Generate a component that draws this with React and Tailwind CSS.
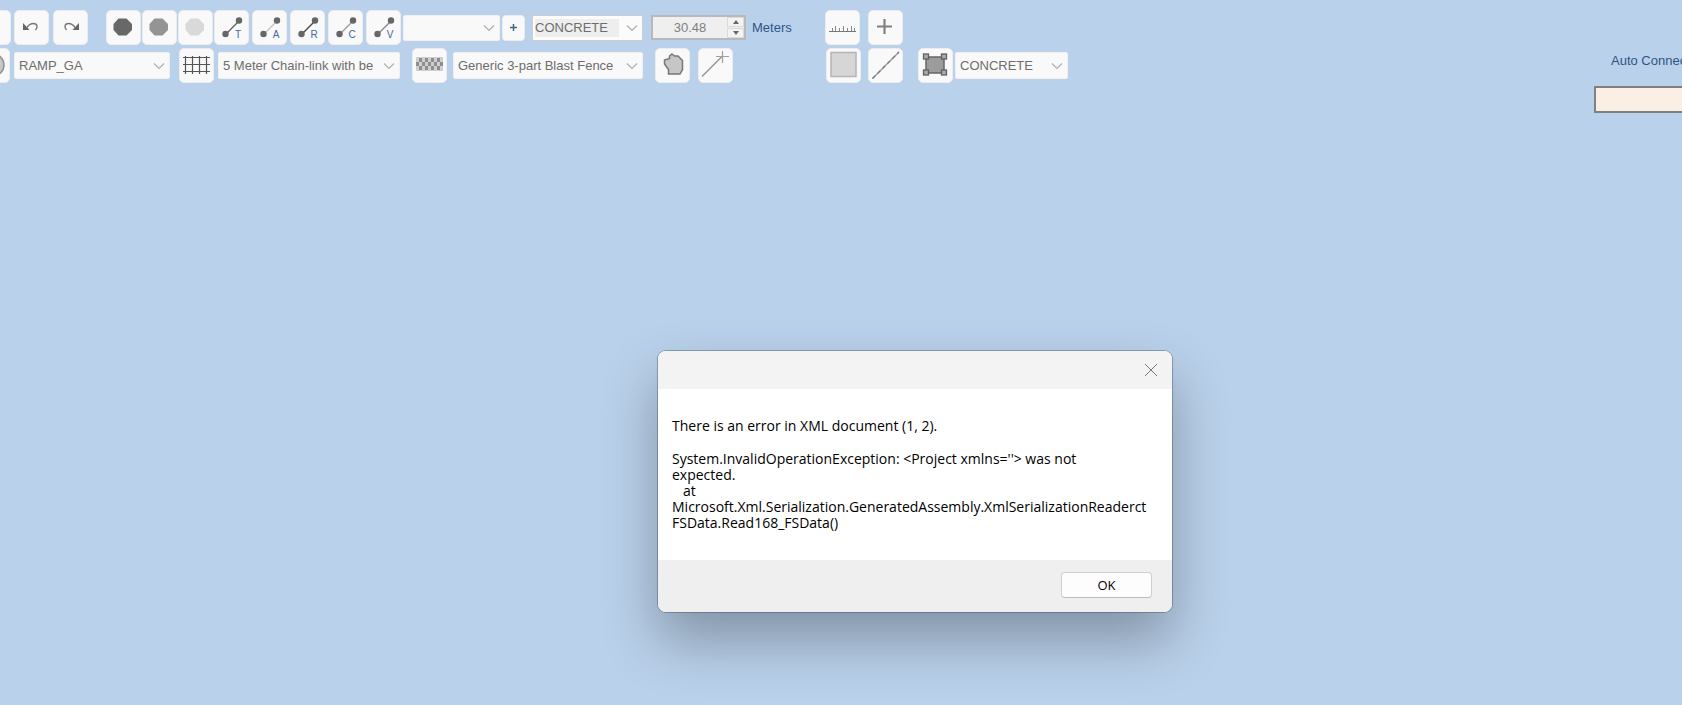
import { useState } from 'react';

const SURFACES = ['CONCRETE', 'ASPHALT', 'GRASS'];
const PARKING = ['RAMP_GA', 'RAMP_CARGO', 'GATE_SMALL'];
const FENCES = ['5 Meter Chain-link with be', '3 Meter Chain-link'];
const BLAST_FENCES = ['Generic 3-part Blast Fence', 'Generic Blast Fence'];

const NODES = [
  { fill: '#686868', label: 'Dark node' },
  { fill: '#949494', label: 'Medium node' },
  { fill: '#d9d9d9', label: 'Light node' },
];

const LINKS = [
  { letter: 'T', stroke: '#666666', label: 'Taxi link' },
  { letter: 'A', stroke: '#c4c4c4', label: 'Apron link' },
  { letter: 'R', stroke: '#4a4a4a', label: 'Runway link' },
  { letter: 'C', stroke: '#a0a0a0', label: 'Closed link' },
  { letter: 'V', stroke: '#8c8c8c', label: 'Vehicle link' },
];

const CHECKS = Array.from({ length: 27 }, (_, i) => ({ x: (i % 9) * 3, y: Math.floor(i / 9) * 4 })).filter(
  (_, i) => i % 2 === 1,
);

function ToolButton({ label, className = '', children }) {
  return (
    <button
      type="button"
      aria-label={label}
      className={`flex size-[35px] shrink-0 items-center justify-center rounded-[5px] border border-[#ececec] bg-[#f9f9f9] ${className}`}
    >
      {children}
    </button>
  );
}

function Icon({ children }) {
  return (
    <svg width="33" height="33" viewBox="0 0 33 33" fill="none" aria-hidden="true">
      {children}
    </svg>
  );
}

function Combo({ label, options, className = '', selectClass = 'border-[#f0f0f0] bg-[#f9f9f9]' }) {
  return (
    <div className={`relative shrink-0 ${className}`}>
      <select
        aria-label={label}
        className={`h-full w-full appearance-none rounded-[2px] border pr-5 text-[#6d6d6d] outline-none ${selectClass}`}
      >
        {options.map((option) => (
          <option key={option}>{option}</option>
        ))}
      </select>
      <svg
        className="pointer-events-none absolute inset-y-0 right-[5px] my-auto"
        width="12"
        height="8"
        viewBox="0 0 12 8"
        fill="none"
        stroke="#b0b0b0"
        strokeWidth="1.200"
        aria-hidden="true"
      >
        <path d="M1 1.500 6 6.500 11 1.500" />
      </svg>
    </div>
  );
}

function LinkIcon({ letter, stroke }) {
  return (
    <Icon>
      <path d="M11 23 24 10" stroke={stroke} strokeWidth="1.500" />
      <circle cx="10.500" cy="23" r="3.200" fill="#666" />
      <circle cx="24" cy="9.500" r="3.200" fill="#666" />
      <text x="23" y="27" textAnchor="middle" fontSize="10" fill="#44689a">
        {letter}
      </text>
    </Icon>
  );
}

function TopRow() {
  const [width, setWidth] = useState(30.48);
  const step = (delta) => setWidth((value) => Number((value + delta).toFixed(2)));

  return (
    <div className="flex items-center">
      <ToolButton label="Save" />
      <ToolButton label="Undo" className="ml-[3px]">
        <Icon>
          <path d="M8 12v7h6.500z" fill="#666" />
          <path d="M11.500 17c2-3 4-4.500 7-4.500 4 0 4.500 4 2 6.500" stroke="#777" strokeWidth="1.400" />
        </Icon>
      </ToolButton>
      <ToolButton label="Redo" className="ml-1">
        <Icon>
          <path d="M25 12v7h-6.500z" fill="#666" />
          <path d="M21.500 17c-2-3-4-4.500-7-4.500-4 0-4.500 4-2 6.500" stroke="#777" strokeWidth="1.400" />
        </Icon>
      </ToolButton>

      <div className="ml-[18px] flex gap-px">
        {NODES.map((node) => (
          <ToolButton key={node.label} label={node.label}>
            <Icon>
              <path d="M11.500 7.500h8l5.500 5.500v6l-5.500 5.500h-8L6.500 19v-6z" fill={node.fill} />
            </Icon>
          </ToolButton>
        ))}
      </div>
      <div className="ml-px flex gap-[3px]">
        {LINKS.map((link) => (
          <ToolButton key={link.letter} label={link.label}>
            <LinkIcon letter={link.letter} stroke={link.stroke} />
          </ToolButton>
        ))}
      </div>

      <Combo label="Name" options={['']} className="ml-0.5 h-[26px] w-[97px]" />
      <button
        type="button"
        aria-label="Add name"
        className="ml-0.5 flex h-[26px] w-[23px] shrink-0 items-center justify-center rounded-[4px] border border-[#ececec] bg-[#f9f9f9]"
      >
        <svg width="7" height="7" viewBox="0 0 7 7" stroke="#47648c" strokeWidth="1.500" aria-hidden="true">
          <path d="M3.500 0v7M0 3.500h7" />
        </svg>
      </button>
      <Combo
        label="Surface"
        options={SURFACES}
        className="ml-[7px] h-[26px] w-[111px]"
        selectClass="border-[#cfcfcf] bg-[linear-gradient(#eeeeee,#eeeeee)] bg-[length:84px_18px] bg-[position:2px_3px] bg-no-repeat bg-[#fbfbfb] pl-0.5"
      />

      <div className="ml-2 flex h-[25px] w-[95px] shrink-0 items-center border-2 border-[#b9b9b9] bg-[#efefef]">
        <input
          id="width"
          type="text"
          value={width.toFixed(2)}
          onChange={(event) => setWidth(Number(event.target.value) || 0)}
          className="w-0 flex-1 bg-transparent text-center text-[#808080] outline-none"
        />
        <div className="flex h-full w-[17px] flex-col gap-px">
          <button
            type="button"
            aria-label="Increase width"
            onClick={() => step(1)}
            className="flex flex-1 items-center justify-center border border-[#dadada] bg-[#f3f3f3]"
          >
            <svg width="6" height="4" viewBox="0 0 6 4" fill="#666" aria-hidden="true">
              <path d="M3 0 6 4H0z" />
            </svg>
          </button>
          <button
            type="button"
            aria-label="Decrease width"
            onClick={() => step(-1)}
            className="flex flex-1 items-center justify-center border border-[#dadada] bg-[#f3f3f3]"
          >
            <svg width="6" height="4" viewBox="0 0 6 4" fill="#666" aria-hidden="true">
              <path d="M3 4 6 0H0z" />
            </svg>
          </button>
        </div>
      </div>
      <label htmlFor="width" className="ml-1.5 w-[73px] shrink-0 text-[#2f5585]">
        Meters
      </label>

      <ToolButton label="Measure">
        <Icon>
          <path d="M3 20.500h27" stroke="#777" />
          <path d="M6.500 20v-3M9.500 20v-5M13.500 20v-3M17.500 20v-5M21.500 20v-3M25.500 20v-5M28.500 20v-3" stroke="#888" />
        </Icon>
      </ToolButton>
      <ToolButton label="Add point" className="ml-2">
        <Icon>
          <path d="M15.500 8v15M8 15.500h15" stroke="#808080" strokeWidth="2.200" />
        </Icon>
      </ToolButton>
    </div>
  );
}

function BottomRow() {
  return (
    <div className="flex items-center">
      <ToolButton label="Parking" className="-ml-px">
        <Icon>
          <circle cx="17" cy="16" r="11" fill="#c8c8c8" stroke="#929292" strokeWidth="1.500" />
        </Icon>
      </ToolButton>
      <Combo
        label="Parking type"
        options={PARKING}
        className="ml-1 h-[27px] w-[156px]"
        selectClass="border-[#f0f0f0] bg-[#f9f9f9] pl-1"
      />

      <ToolButton label="Fence" className="ml-[9px]">
        <Icon>
          <path d="M5.500 7v18M12.500 7v18M19.500 7v18M26.500 7v18M3 8.500h27M3 15.500h27M3 22.500h27" stroke="#555" strokeWidth="1.200" />
        </Icon>
      </ToolButton>
      <Combo
        label="Fence type"
        options={FENCES}
        className="ml-1 h-[27px] w-[182px]"
        selectClass="border-[#f0f0f0] bg-[#f9f9f9] pl-1"
      />

      <ToolButton label="Blast fence" className="ml-3">
        <Icon>
          <rect x="3" y="8" width="27" height="14" fill="#cfcfcf" />
          {CHECKS.map(({ x, y }) => (
            <rect key={`${x}-${y}`} x={x + 3} y={y + 9} width="3" height="4" fill="#8e8e8e" />
          ))}
        </Icon>
      </ToolButton>
      <Combo
        label="Blast fence type"
        options={BLAST_FENCES}
        className="ml-1.5 h-[27px] w-[190px]"
        selectClass="border-[#f0f0f0] bg-[#f9f9f9] pl-1"
      />

      <ToolButton label="Polygon" className="ml-3">
        <Icon>
          <path d="M16 5 18.500 7h3.500l4.500 4.500v9L24 25H12.500v-4.500L8.500 15v-4l5-1.500V7z" fill="#c6c6c6" stroke="#777" strokeWidth="1.500" />
        </Icon>
      </ToolButton>
      <ToolButton label="Line end" className="ml-2">
        <Icon>
          <path d="M3 27.500 23 7.500" stroke="#959595" strokeWidth="1.500" />
          <path d="M23.500 2v12M17 7.500h13" stroke="#a0a0a0" strokeWidth="1.200" />
        </Icon>
      </ToolButton>

      <ToolButton label="Rectangle" className="ml-[93px]">
        <Icon>
          <rect x="4" y="3.500" width="25" height="24" fill="#d6d6d6" stroke="#b4b4b4" strokeWidth="1.500" />
        </Icon>
      </ToolButton>
      <ToolButton label="Line" className="ml-[7px]">
        <Icon>
          <path d="M3.500 29.500 30 3" stroke="#999" strokeWidth="1.200" />
          <path d="M3.500 29.500 30 3" stroke="#777" strokeWidth="1.200" strokeDasharray="4 3" />
        </Icon>
      </ToolButton>

      <ToolButton label="Apron" className="ml-[15px]">
        <Icon>
          <rect x="7" y="8" width="18" height="16" fill="#9c9c9c" stroke="#666" strokeWidth="1.500" />
          <g fill="#aaa" stroke="#606060" strokeWidth="1.300">
            <rect x="4.500" y="5" width="5" height="5" />
            <rect x="22.500" y="5" width="5" height="5" />
            <rect x="4.500" y="21" width="5" height="5" />
            <rect x="22.500" y="21" width="5" height="5" />
          </g>
        </Icon>
      </ToolButton>
      <Combo
        label="Apron surface"
        options={SURFACES}
        className="ml-0.5 h-[27px] w-[113px]"
        selectClass="border-[#f0f0f0] bg-[#f9f9f9] pl-1"
      />
    </div>
  );
}

function ErrorDialog({ onClose }) {
  return (
    <div
      role="alertdialog"
      aria-describedby="error-text"
      className="absolute left-[658px] top-[351px] w-[514px] overflow-hidden rounded-lg bg-white font-['Open_Sans','Noto_Sans',sans-serif] text-sm text-black shadow-[0_0_0_1px_rgba(60,75,95,0.4),0_28px_56px_rgba(0,0,0,0.3)]"
    >
      <div className="flex h-[38px] items-center justify-end bg-[#f3f3f3] pr-[15px]">
        <button type="button" aria-label="Close" onClick={onClose}>
          <svg width="12" height="12" viewBox="0 0 12 12" stroke="#777" aria-hidden="true">
            <path d="M0 0 12 12M12 0 0 12" />
          </svg>
        </button>
      </div>
      <div id="error-text" className="px-3.5 pb-[29px] pt-[29px] leading-4">
        <p>There is an error in XML document (1, 2).</p>
        <p className="mt-[17px] whitespace-pre">
          {`System.InvalidOperationException: <Project xmlns=''> was not
expected.
   at
Microsoft.Xml.Serialization.GeneratedAssembly.XmlSerializationReaderct
FSData.Read168_FSData()`}
        </p>
      </div>
      <div className="flex justify-end bg-[#efefef] px-5 pb-3.5 pt-3">
        <button
          type="button"
          onClick={onClose}
          className="h-[26px] w-[91px] rounded border border-[#d0d0d0] border-b-[#bcbcbc] bg-[#fdfdfd] text-[13px] leading-4"
        >
          OK
        </button>
      </div>
    </div>
  );
}

export default function App() {
  const [showError, setShowError] = useState(true);

  return (
    <main className="relative min-h-screen overflow-hidden bg-[#bad1eb] font-['Liberation_Sans',Arial,sans-serif] text-[13px] leading-4">
      <div className="flex justify-between">
        <div className="-ml-6 flex flex-col gap-[3px] pt-[10px]">
          <TopRow />
          <BottomRow />
        </div>
        <div className="flex w-[88px] flex-col gap-[17px] overflow-hidden whitespace-nowrap pt-[53px]">
          <label htmlFor="auto-connect" className="pl-[17px] text-[#2f5585]">
            Auto Connect
          </label>
          <input
            id="auto-connect"
            type="text"
            className="h-[27px] w-36 border-2 border-[#808080] bg-[#faefe4] px-1 outline-none"
          />
        </div>
      </div>
      {showError && <ErrorDialog onClose={() => setShowError(false)} />}
    </main>
  );
}
